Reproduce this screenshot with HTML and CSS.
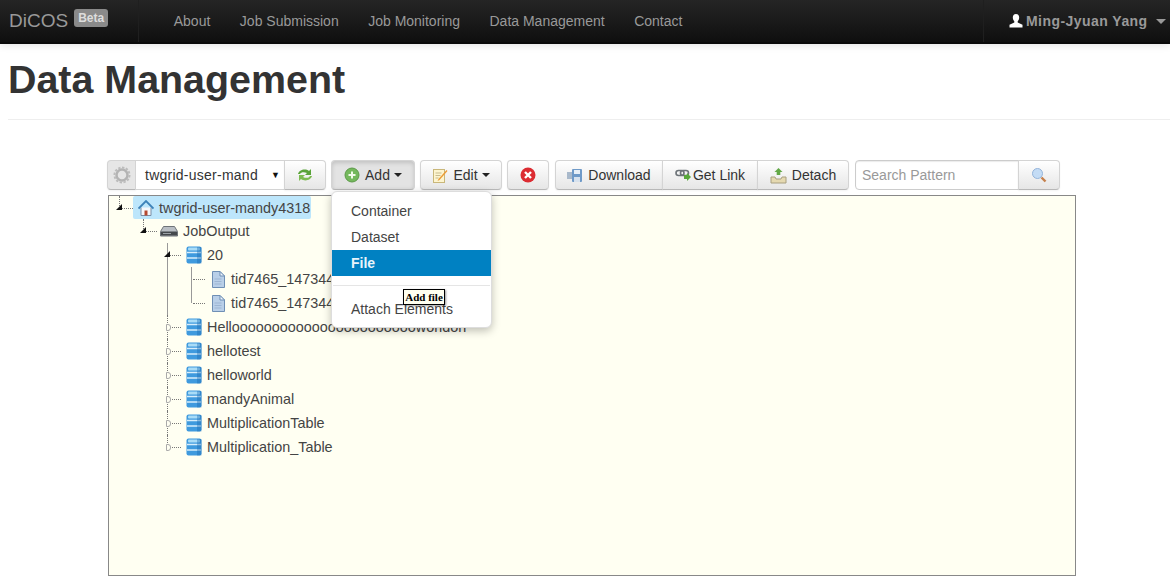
FILE: index.html
```html
<!DOCTYPE html>
<html lang="en">
<head>
    <meta charset="UTF-8">
    <title>Data Management</title>
    <link rel="stylesheet" href="styles.css">
</head>
<body>
    <svg class="defs" width="0" height="0">
        <symbol id="i-db" viewBox="0 0 16 18">
            <rect x="0.500" y="0.500" width="15" height="17" rx="2" fill="#3f9ade"/>
            <rect x="2" y="1.500" width="12" height="3" rx="1" fill="#a9dcf7"/>
            <path d="M1 6.500h14M1 12h14" stroke="#d8eefb" stroke-width="1.600"/>
            <rect x="11" y="1" width="4.500" height="16.500" fill="#1d6cb2" opacity=".4"/>
        </symbol>
        <symbol id="i-file" viewBox="0 0 14 17">
            <path d="M1.500.5h7.500l4.500 4.500v11.500h-12z" fill="#b9cfe8" stroke="#6f8fb5"/>
            <path d="M9 .5v4.500h4.500z" fill="#eef4fb" stroke="#6f8fb5"/>
            <path d="M3.500 8h7M3.500 10.500h7M3.500 13h7" stroke="#9db5d3"/>
        </symbol>
        <symbol id="i-home" viewBox="0 0 16 16">
            <path d="M3 7.500v8h10v-8" fill="#f5f7fa" stroke="#7a8ea5"/>
            <path d="M.5 8.500l7.500-7.500 7.500 7.500" fill="none" stroke="#3d82b8" stroke-width="1.800"/>
            <path d="M6.500 15.500v-5h3v5z" fill="#b5482f"/>
        </symbol>
        <symbol id="i-drive" viewBox="0 0 18 12">
            <path d="M3.500 1.500h11l3 5v4.500h-17v-4.500z" fill="#b9bec4" stroke="#6e7378"/>
            <rect x="1" y="6.500" width="16" height="4" fill="#44484c"/>
            <path d="M3 8.500h8" stroke="#9aa0a5"/>
        </symbol>
    </svg>

    <header class="navbar">
        <div class="brand">DiCOS <span class="beta">Beta</span></div>
        <nav class="main-nav">
            <a href="#">About</a>
            <a href="#">Job Submission</a>
            <a href="#">Job Monitoring</a>
            <a href="#">Data Management</a>
            <a href="#">Contact</a>
        </nav>
        <div class="user">
            <svg class="user-icon" width="14" height="14" viewBox="0 0 14 14"><path d="M7 0c2.200 0 3.200 1.600 3.200 3.600 0 1.500-.7 3-1.500 3.700v1.200l4.800 2.300v2.700h-13v-2.700l4.800-2.300v-1.200c-.8-.7-1.500-2.200-1.500-3.700 0-2 1-3.600 3.200-3.600z" fill="#fff"/></svg>
            Ming-Jyuan Yang
            <span class="caret caret-nav"></span>
        </div>
    </header>

    <div class="page-header">
        <h1>Data Management</h1>
    </div>

    <section class="manager">
        <div class="toolbar">
            <div class="group">
                <button class="btn btn-gear">
                    <svg width="18" height="18" viewBox="0 0 18 18"><circle cx="9" cy="9" r="5.500" fill="#e6e6e6" stroke="#b4b4b4" stroke-width="2.500"/><circle cx="9" cy="9" r="7.500" fill="none" stroke="#bcbcbc" stroke-width="2" stroke-dasharray="2.400 1.500"/></svg>
                </button>
                <div class="select"><span class="select-text">twgrid-user-mand</span><span class="select-arrow">▼</span></div>
                <button class="btn btn-icon">
                    <svg width="18" height="16" viewBox="0 0 18 16"><path d="M2 7c1-4 7-6 11-3l2-2v6h-6l2-2c-3-1.500-6-1-7 1z" fill="#5aa33a"/><path d="M16 9c-1 4-7 6-11 3l-2 2v-6h6l-2 2c3 1.500 6 1 7-1z" fill="#7dbb52"/></svg>
                </button>
            </div>
            <div class="dropdown">
                <button class="btn btn-add active">
                    <svg width="16" height="16" viewBox="0 0 16 16"><circle cx="8" cy="8" r="7" fill="#74b85c" stroke="#5c9a48"/><path d="M8 4.500v7M4.500 8h7" stroke="#f2fbe9" stroke-width="2"/></svg>
                    Add <span class="caret"></span>
                </button>
                <div class="menu">
                    <a href="#">Container</a>
                    <a href="#">Dataset</a>
                    <a href="#" class="selected">File</a>
                    <div class="divider"></div>
                    <a href="#">Attach Elements</a>
                    <div class="tooltip">Add file</div>
                </div>
            </div>
            <button class="btn btn-edit">
                <svg width="16" height="16" viewBox="0 0 16 16"><rect x="1.500" y="2.500" width="11" height="13" fill="#fdf5cf" stroke="#c9b77a"/><path d="M3.500 6h6M3.500 8.500h5M3.500 11h3" stroke="#c7bb8f"/><path d="M6.500 12l8-9 1 1-8 9-2 1z" fill="#eb9b35"/></svg>
                Edit <span class="caret"></span>
            </button>
            <button class="btn btn-icon btn-delete">
                <svg width="16" height="16" viewBox="0 0 16 16"><circle cx="8" cy="8" r="7.500" fill="#dc2c32"/><path d="M5 5l6 6M11 5l-6 6" stroke="#fff" stroke-width="2.400"/></svg>
            </button>
            <div class="group">
                <button class="btn btn-download">
                    <svg width="16" height="16" viewBox="0 0 16 16"><rect x="0" y="5" width="9" height="7" fill="#a9b9cb"/><rect x="5" y="2" width="10" height="13" rx="1" fill="#6f9ac8"/><rect x="7" y="3" width="6" height="4" fill="#e8f0f8"/><rect x="7" y="10" width="6" height="5" fill="#d7e2ee"/></svg>
                    Download
                </button>
                <button class="btn btn-link">
                    <svg width="17" height="14" viewBox="0 0 17 14"><rect x="1" y="2.500" width="8" height="5" rx="2.500" fill="none" stroke="#6d7378" stroke-width="1.600"/><rect x="5.500" y="2.500" width="8" height="5" rx="2.500" fill="none" stroke="#6d7378" stroke-width="1.600"/><path d="M9 7h3v-2l4 4-4 4v-2h-3z" fill="#58a83a"/></svg>
                    Get Link
                </button>
                <button class="btn btn-detach">
                    <svg width="17" height="17" viewBox="0 0 17 17"><path d="M8.500 1l4 4h-2.200v3h-3.600v-3h-2.200z" fill="#63a847"/><path d="M1 10h4l1 2h5l1-2h4v6h-15z" fill="#e5d9b0" stroke="#a89f80"/></svg>
                    Detach
                </button>
            </div>
            <div class="group search">
                <input class="search-input" type="text" placeholder="Search Pattern">
                <button class="btn btn-icon">
                    <svg width="16" height="16" viewBox="0 0 16 16"><circle cx="6.500" cy="6.500" r="5" fill="#c4dcf5" stroke="#94b4da"/><path d="M10.500 10.500l4 4" stroke="#c5814d" stroke-width="2.400"/></svg>
                </button>
            </div>
        </div>

        <div class="tree-box">
            <ul class="tree">
                <li class="open">
                    <div class="node current"><svg class="icon" width="16" height="16"><use href="#i-home"/></svg>twgrid-user-mandy4318</div>
                    <ul>
                        <li class="open">
                            <div class="node"><svg class="icon icon-drive" width="18" height="12"><use href="#i-drive"/></svg>JobOutput</div>
                            <ul class="datasets">
                                <li class="open">
                                    <div class="node"><svg class="icon" width="16" height="18"><use href="#i-db"/></svg>20</div>
                                    <ul class="files">
                                        <li><div class="node"><svg class="icon icon-file" width="14" height="17"><use href="#i-file"/></svg>tid7465_147344</div></li>
                                        <li><div class="node"><svg class="icon icon-file" width="14" height="17"><use href="#i-file"/></svg>tid7465_147344</div></li>
                                    </ul>
                                </li>
                                <li class="closed"><div class="node"><svg class="icon" width="16" height="18"><use href="#i-db"/></svg>Helloooooooooooooooooooooooworldon</div></li>
                                <li class="closed"><div class="node"><svg class="icon" width="16" height="18"><use href="#i-db"/></svg>hellotest</div></li>
                                <li class="closed"><div class="node"><svg class="icon" width="16" height="18"><use href="#i-db"/></svg>helloworld</div></li>
                                <li class="closed"><div class="node"><svg class="icon" width="16" height="18"><use href="#i-db"/></svg>mandyAnimal</div></li>
                                <li class="closed"><div class="node"><svg class="icon" width="16" height="18"><use href="#i-db"/></svg>MultiplicationTable</div></li>
                                <li class="closed"><div class="node"><svg class="icon" width="16" height="18"><use href="#i-db"/></svg>Multiplication_Table</div></li>
                            </ul>
                        </li>
                    </ul>
                </li>
            </ul>
        </div>
    </section>
</body>
</html>
```

FILE: styles.css
```css
html, body {
    height: 100%;
}
body {
    margin: 0;
    overflow: hidden;
    font-family: "Liberation Sans", Arial, sans-serif;
    font-size: 14px;
    color: #333;
    background-color: #fff;
}
.defs {
    position: absolute;
}
a {
    text-decoration: none;
}

/* top bar */
.navbar {
    display: flex;
    align-items: center;
    height: 42px;
    background: linear-gradient(#252525, #0f0f0f);
    border-bottom: 2px solid #0a0a0a;
    box-shadow: 0 1px 8px rgba(0, 0, 0, 0.12);
}
.brand {
    width: 129px;
    height: 42px;
    padding-left: 9px;
    display: flex;
    align-items: center;
    gap: 6px;
    font-size: 19px;
    color: #999;
    border-right: 1px solid #1f1f1f;
}
.beta {
    margin-top: -7px;
    padding: 2px 4px;
    height: 14px;
    line-height: 14px;
    font-size: 12px;
    font-weight: bold;
    color: #ddd;
    background-color: #8a8a8a;
    border-radius: 3px;
}
.main-nav {
    display: flex;
    margin-left: 20px;
}
.main-nav a {
    padding: 0 14.75px;
    color: #999;
    line-height: 40px;
}
.user {
    margin-left: auto;
    width: 187px;
    height: 42px;
    padding-left: 25px;
    box-sizing: border-box;
    display: flex;
    align-items: center;
    font-weight: bold;
    letter-spacing: 0.45px;
    color: #999;
    border-left: 1px solid #1f1f1f;
}
.user-icon {
    margin-right: 3px;
}
.caret {
    display: inline-block;
    width: 0;
    height: 0;
    margin-left: -1px;
    vertical-align: middle;
    border-top: 4px solid #222;
    border-left: 4px solid transparent;
    border-right: 4px solid transparent;
}
.caret-nav {
    margin-left: 8px;
    border-top-color: #999;
    border-left-width: 5px;
    border-right-width: 5px;
    border-top-width: 5px;
}

/* heading */
.page-header {
    margin-left: 8px;
    height: 75px;
    border-bottom: 1px solid #eee;
}
h1 {
    margin: 0;
    padding-top: 11px;
    font-size: 39.4px;
    line-height: 48px;
    font-weight: bold;
    color: #333;
}

/* toolbar */
.manager {
    padding: 40px 0 0 107px;
}
.toolbar {
    display: flex;
    gap: 5px;
    height: 30px;
}
.group {
    display: flex;
}
.btn {
    display: flex;
    align-items: center;
    justify-content: center;
    gap: 5px;
    height: 30px;
    box-sizing: border-box;
    padding: 0;
    font-family: inherit;
    font-size: 14px;
    color: #333;
    background: linear-gradient(#fff, #e6e6e6);
    border: 1px solid #d4d4d4;
    border-bottom-color: #b8b8b8;
    border-radius: 4px;
    box-shadow: 0 1px 2px rgba(0, 0, 0, 0.05);
}
.btn.active {
    background: #e3e3e3;
    box-shadow: inset 0 2px 4px rgba(0, 0, 0, 0.15);
}
.group .btn {
    border-radius: 0;
    margin-left: -1px;
}
.group .btn:first-child {
    margin-left: 0;
    border-radius: 4px 0 0 4px;
}
.group .btn:last-child {
    border-radius: 0 4px 4px 0;
}
.btn-gear {
    width: 29px;
    background: #e6e6e6;
}
.btn-icon {
    width: 42px;
}
.btn-add {
    width: 84px;
}
.btn-edit {
    width: 82px;
}
.btn-delete {
    margin-right: 1px;
}
.btn-download {
    width: 108px;
}
.btn-link {
    width: 96px;
    gap: 1px;
}
.btn-detach {
    width: 92px;
}
.select {
    display: flex;
    align-items: center;
    width: 150px;
    height: 30px;
    box-sizing: border-box;
    margin-left: -1px;
    padding-left: 9px;
    background: #fff;
    border: 1px solid #d4d4d4;
}
.select-text {
    width: 113px;
    letter-spacing: 0.25px;
    white-space: nowrap;
}
.select-arrow {
    margin-left: 13px;
    font-size: 9px;
    color: #111;
}
.search {
    margin-left: 1px;
}
.search-input {
    width: 164px;
    height: 30px;
    box-sizing: border-box;
    padding: 0 6px;
    font-family: inherit;
    font-size: 14px;
    background: #fff;
    border: 1px solid #ccc;
    border-radius: 4px 0 0 4px;
    box-shadow: inset 0 1px 1px rgba(0, 0, 0, 0.08);
}
.search-input::placeholder {
    color: #999;
}

/* add menu */
.dropdown {
    position: relative;
}
.menu {
    position: absolute;
    top: 31px;
    left: 0;
    z-index: 2;
    width: 161px;
    box-sizing: border-box;
    padding: 6px 0 5px;
    background: #fff;
    border-radius: 6px;
    border: 1px solid #ddd;
    box-shadow: 0 3px 8px rgba(0, 0, 0, 0.25);
}
.menu a {
    display: block;
    height: 26px;
    line-height: 26px;
    padding-left: 19px;
    color: #444;
}
.menu a.selected {
    font-weight: bold;
    color: #e8f4fb;
    background-color: #0081c2;
}
.divider {
    height: 1px;
    margin: 9px 1px 10px;
    background-color: #e5e5e5;
}
.tooltip {
    position: absolute;
    top: 97px;
    left: 71px;
    width: 42px;
    height: 16px;
    box-sizing: border-box;
    line-height: 14px;
    text-align: center;
    font-family: "Liberation Serif", serif;
    font-size: 11px;
    font-weight: bold;
    color: #000;
    background-color: #fffff0;
    border: 1px solid #000;
    box-shadow: 1px 1px 2px rgba(0, 0, 0, 0.4);
}

/* tree */
.tree-box {
    width: 968px;
    height: 381px;
    box-sizing: border-box;
    margin: 5px 0 0 1px;
    font-size: 14.4px;
    background-color: #fffff2;
    border: 1px solid #888;
    overflow: hidden;
}
.tree, .tree ul {
    margin: 0;
    padding: 0;
    list-style: none;
}
.tree li {
    position: relative;
    padding-left: 24px;
}
/* connector lines */
.tree li::before {
    content: "";
    position: absolute;
    top: 0;
    bottom: 0;
    left: 10px;
    border-left: 1px dotted #777;
}
.tree li:last-child::before {
    bottom: auto;
    height: 12px;
}
.tree li > .node::before {
    content: "";
    position: absolute;
    top: 12px;
    left: 12px;
    width: 12px;
    border-top: 1px dotted #777;
}
.datasets > li.open::before,
.files li::before {
    border-left: 1px solid #999;
}
/* expanders */
.tree li.open::after {
    content: "";
    position: absolute;
    top: 8px;
    left: 7px;
    border-bottom: 6px solid #111;
    border-left: 6px solid transparent;
}
.tree li.closed::after {
    content: "";
    position: absolute;
    top: 9px;
    left: 9px;
    width: 3px;
    height: 5px;
    background-color: #fffff2;
    border: 1px solid #aaa;
    border-radius: 0 3px 3px 0;
}
.node {
    display: inline-flex;
    align-items: center;
    gap: 5px;
    height: 24px;
    padding: 0 2px 0 5px;
    box-sizing: border-box;
    white-space: nowrap;
    color: #444;
    vertical-align: top;
}
.node.current {
    height: 23px;
    background-color: #bde6fb;
    border-radius: 2px;
    padding-right: 1px;
}
.icon-drive {
    margin-left: -2px;
}
.icon-file {
    margin-left: 1px;
    margin-right: 1px;
}
```
